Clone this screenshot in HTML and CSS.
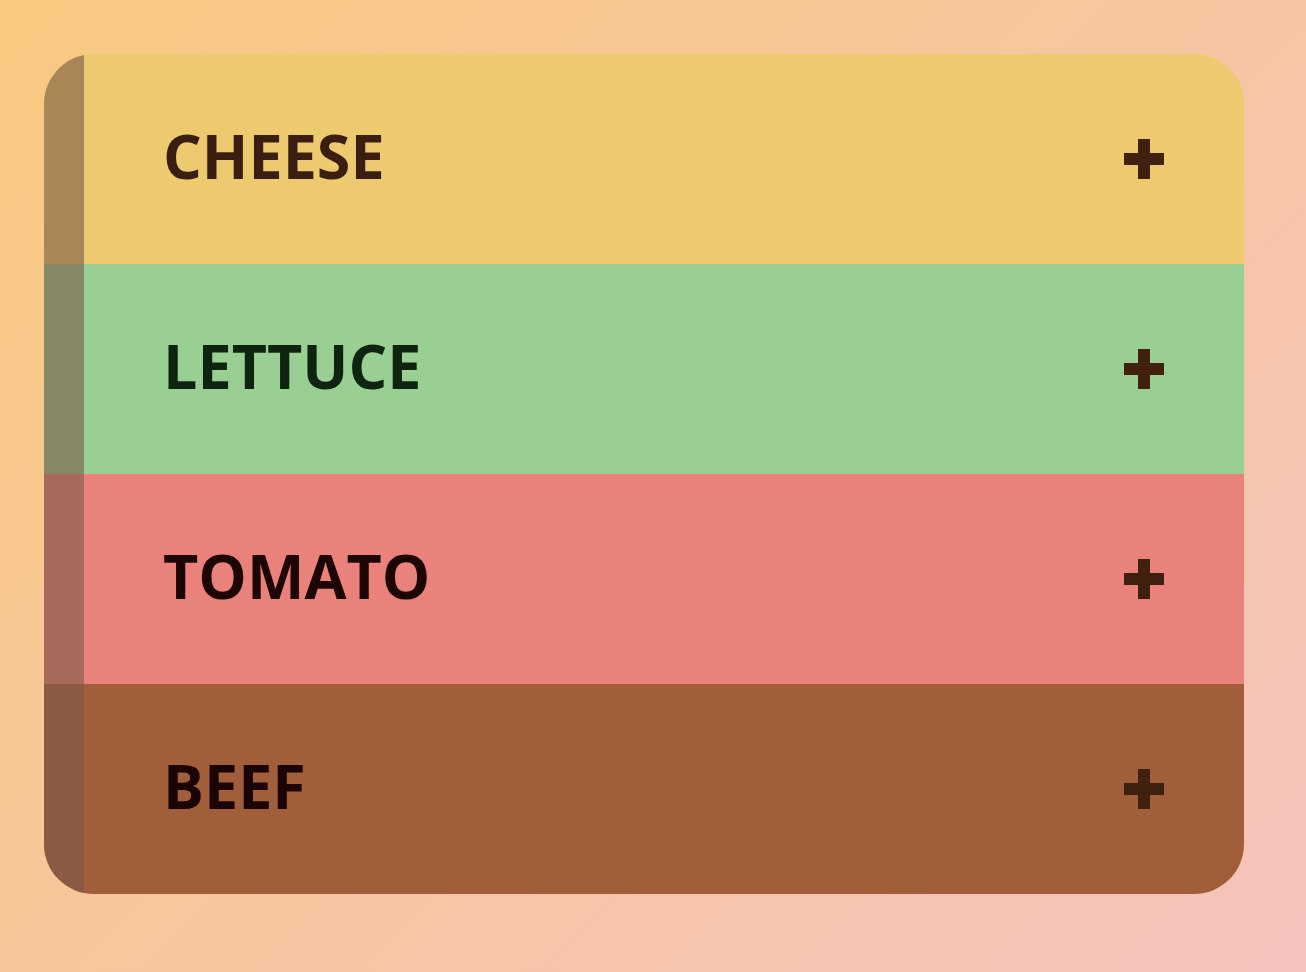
FILE: index.html
```html
<!DOCTYPE html>
<html>
<head>
<meta charset="utf-8">
<link rel="stylesheet" href="styles.css">
</head>
<body>
<div class="card">
  <div class="row cheese"><span class="label">CHEESE</span><span class="plus"></span></div>
  <div class="row lettuce"><span class="label">LETTUCE</span><span class="plus"></span></div>
  <div class="row tomato"><span class="label">TOMATO</span><span class="plus"></span></div>
  <div class="row beef"><span class="label">BEEF</span><span class="plus"></span></div>
</div>
</body>
</html>
```
FILE: styles.css
```css
html, body { margin: 0; padding: 0; }
body {
  width: 1306px;
  height: 972px;
  background: linear-gradient(135deg, #F8C97F 0%, #F6C6A2 55%, #F5C3BE 100%);
  font-family: "Open Sans", "Liberation Sans", sans-serif;
  padding: 54px 0 0 44px;
  box-sizing: border-box;
}
.card {
  width: 1200px;
  height: 840px;
  border-radius: 50px;
  overflow: hidden;
  display: flex;
  flex-direction: column;
}
.row {
  flex: 1;
  display: flex;
  align-items: center;
  justify-content: space-between;
  border-left: 40px solid rgba(123, 90, 72, 0.6);
  padding: 0 80px 0 79px;
}
.label {
  font-size: 61px;
  font-weight: 700;
  letter-spacing: 0;
  line-height: 1;
  margin-top: -8px;
}
.plus {
  width: 40px;
  height: 40px;
  position: relative;
}
.plus::before, .plus::after {
  content: "";
  position: absolute;
  background: #40200E;
}
.plus::before { left: 14px; top: 0; width: 12px; height: 40px; }
.plus::after { left: 0; top: 14px; width: 40px; height: 12px; }
.cheese { background: #EDC970; }
.cheese .label { color: #3A1E10; }
.lettuce { background: #9ACF93; }
.lettuce .label { color: #0F2410; }
.tomato { background: #E8827A; }
.tomato .label { color: #1E0505; }
.beef { background: #A15E3A; }
.beef .label { color: #1A0404; }
```
